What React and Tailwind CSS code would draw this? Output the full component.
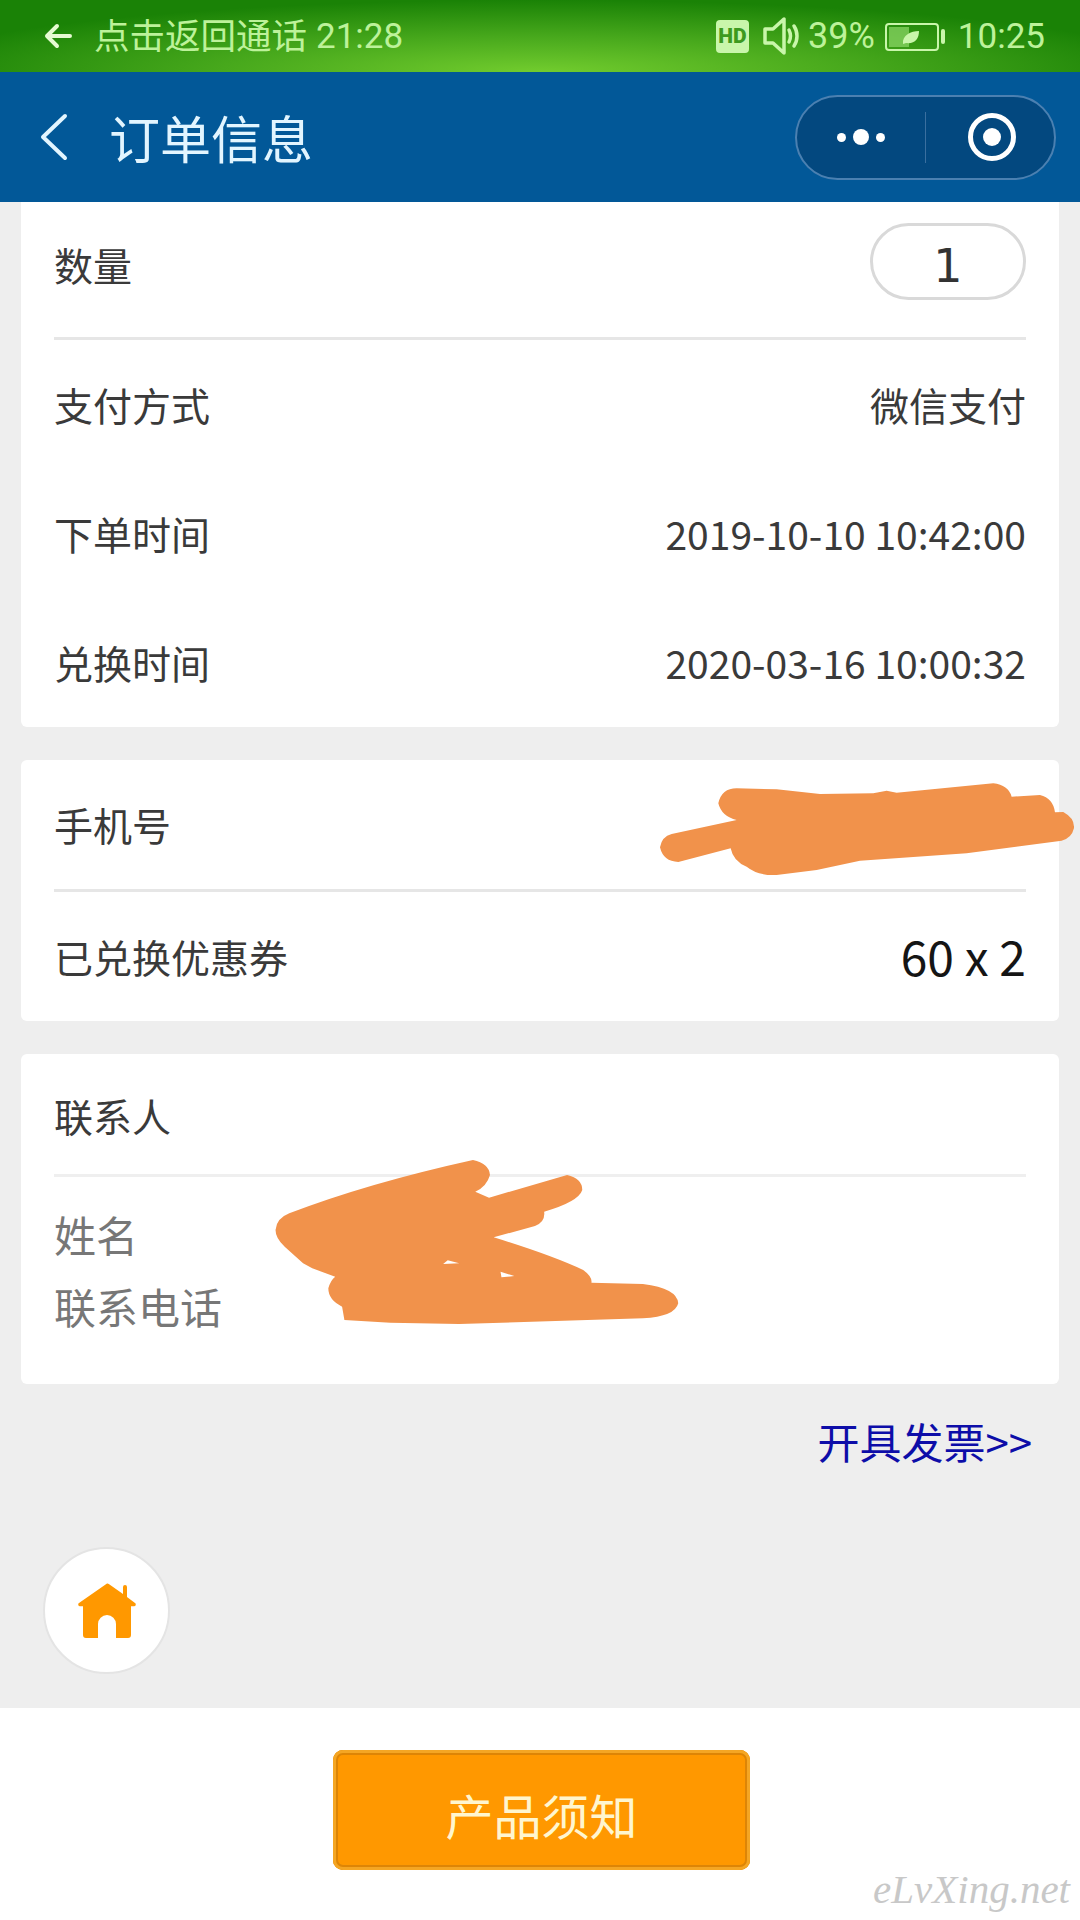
const Row = ({ label, children, className = "h-[129px]" }) => (
  <div className={`flex items-center justify-between px-[33px] ${className}`}>
    <span className="text-[39px] leading-none text-[#3a3a3a]">{label}</span>
    {children}
  </div>
);

const Divider = ({ className = "bg-[#e6e6e6]" }) => (
  <div className={`mx-[33px] h-[3px] ${className}`} />
);

const StatusBar = () => (
  <div className="flex h-[72px] items-center justify-between bg-[radial-gradient(ellipse_640px_72px_at_50%_100%,#72cc2e_0%,#47a81c_50%,#1a8206_100%)] pl-[44px] pr-[35px] font-['Roboto','Noto_Sans_CJK_SC',sans-serif] text-[#bdf29a]">
    <div className="flex items-center">
      <svg width="28" height="26" viewBox="0 0 28 26" fill="none" stroke="#e6fbd2" strokeWidth="4" strokeLinecap="round" strokeLinejoin="round">
        <path d="M26 13H3M13 3L3 13l10 10" />
      </svg>
      <span className="-mt-[4px] ml-[22px] text-[35.5px] leading-none font-['Noto_Sans_CJK_SC',sans-serif]">点击返回通话</span>
      <span className="ml-[9px] text-[35px] leading-none">21:28</span>
    </div>
    <div className="flex items-center">
      <div className="flex h-[33px] w-[33px] items-center justify-center rounded-[4px] bg-[#c9f6ab] text-[21px] leading-none font-black text-[#3d9a1f]">HD</div>
      <svg className="ml-[14px]" width="38" height="40" viewBox="0 0 38 40" fill="none" stroke="#c9f6ab" strokeWidth="3.500">
        <path d="M2 13h8L21 3v34L10 27H2z" strokeLinejoin="round" />
        <path d="M26 14c2 4 2 8 0 12M31 10c4 6 4 14 0 20" strokeLinecap="round" />
      </svg>
      <span className="ml-[7px] text-[36px] leading-none">39%</span>
      <svg className="ml-[10px]" width="62" height="30" viewBox="0 0 62 30">
        <rect x="1" y="3" width="52" height="26" rx="3" fill="none" stroke="#c9f6ab" strokeWidth="2" />
        <rect x="4" y="6" width="20" height="20" fill="#8fd96a" opacity="0.7" />
        <path d="M18 23c-1-9 8-13 16-13 0 8-4 13-13 12z" fill="#c9f6ab" />
        <rect x="56" y="8" width="4" height="15" rx="2" fill="#c9f6ab" />
      </svg>
      <span className="ml-[11px] text-[35px] leading-none">10:25</span>
    </div>
  </div>
);

const NavBar = () => (
  <div className="flex h-[130px] items-center justify-between bg-[#025898] pr-[24px] pl-[40px]">
    <div className="flex items-center text-[#e2f5ff]">
      <svg width="28" height="48" viewBox="0 0 28 48" fill="none" stroke="currentColor" strokeWidth="4" strokeLinecap="round" strokeLinejoin="round">
        <path d="M25 3L3 24l22 21" />
      </svg>
      <span className="ml-[41px] text-[51px] leading-none">订单信息</span>
    </div>
    <div className="flex h-[85px] w-[261px] items-center rounded-full border-2 border-[#4b80b1] bg-[#03487f]">
      <div className="flex w-[128px] items-center justify-center gap-[7px]">
        <span className="h-[9px] w-[9px] rounded-full bg-white" />
        <span className="h-[16px] w-[16px] rounded-full bg-white" />
        <span className="h-[9px] w-[9px] rounded-full bg-white" />
      </div>
      <div className="h-[51px] w-px bg-[#3a6f9f]" />
      <div className="flex flex-1 items-center justify-center pl-[3px]">
        <svg width="48" height="48" viewBox="0 0 48 48">
          <circle cx="24" cy="24" r="21.5" fill="none" stroke="white" strokeWidth="5" />
          <circle cx="24" cy="24" r="9" fill="white" />
        </svg>
      </div>
    </div>
  </div>
);

// orange pen marks sit on top of the private fields
const Scribbles = () => (
  <svg className="pointer-events-none absolute top-0 left-0" width="1080" height="1920" viewBox="0 0 1080 1920" fill="#f1924b">
    <path
      transform="translate(600 740) scale(0.3333)"
      d="M355 190Q365 145 410 145L530 148 660 162 820 160 860 152 890 158 1180 130Q1225 135 1235 170L1320 165Q1360 175 1365 217L1390 216Q1425 235 1422 265 1415 295 1385 302L1100 340 780 362 650 390 530 405Q475 408 440 380 400 365 392 325L235 366Q190 365 180 322 185 290 215 282L410 240Q365 230 355 190Z"
    />
    <path
      transform="translate(0 1100) scale(0.4592 0.3333)"
      d="M600 390Q602 355 630 340 800 250 1030 180 1065 190 1067 225 1060 260 1035 275L1065 293 1235 225Q1268 235 1268 270 1260 305 1185 335 1188 365 1165 378L1075 412Q1200 465 1270 510 1290 530 1288 548L1400 552Q1475 565 1477 610 1470 650 1400 655L1000 672 850 668 750 660 745 620Q715 600 715 565 720 540 730 530L680 505 660 490 620 440Q600 415 600 390Z"
    />
    <path fill="white" transform="translate(0 1100) scale(0.4592 0.3333)" d="M965 492L975 481 1000 490ZM1090 515L1120 528 1092 532Z" />
  </svg>
);

export default function App() {
  return (
    <div className="relative flex h-[1920px] w-[1080px] flex-col overflow-hidden bg-[#eeeeee] font-['Noto_Sans_CJK_SC',sans-serif]">
      <StatusBar />
      <NavBar />

      <main className="flex flex-1 flex-col gap-[33px] px-[21px]">
        <section className="h-[525px] rounded-b-[6px] bg-white">
          <Row label="数量" className="mb-[10px] h-[125px]">
            <div className="mb-[6px] flex h-[77px] w-[156px] items-center justify-center rounded-full border-[3px] border-[#d9d9d9] pt-[9px] font-['DejaVu_Sans',sans-serif] text-[46px] leading-none text-[#333333]">1</div>
          </Row>
          <Divider />
          <Row label="支付方式">
            <span className="text-[39px] leading-none text-[#3a3a3a]">微信支付</span>
          </Row>
          <Row label="下单时间">
            <span className="text-[39px] leading-none text-[#3a3a3a]">2019-10-10 10:42:00</span>
          </Row>
          <Row label="兑换时间">
            <span className="text-[39px] leading-none text-[#3a3a3a]">2020-03-16 10:00:32</span>
          </Row>
        </section>

        <section className="h-[261px] rounded-[6px] bg-white">
          <Row label="手机号" className="h-[129px]" />
          <Divider />
          <Row label="已兑换优惠券" className="h-[129px]">
            <span className="pb-[4px] text-[48px] leading-none text-[#151515]">60 x 2</span>
          </Row>
        </section>

        <section className="h-[330px] rounded-[6px] bg-white">
          <Row label="联系人" className="h-[120px] pt-[3px]" />
          <Divider className="bg-[#efefef]" />
          <div className="flex flex-col gap-[30px] px-[33px] pt-[36px] text-[42px] leading-none text-[#777777]">
            <span>姓名</span>
            <span>联系电话</span>
          </div>
        </section>

        <div className="mt-[3px] flex justify-end pr-[27px]">
          <span className="text-[42px] leading-none text-[#0d0da8]">开具发票&gt;&gt;</span>
        </div>

        <div className="mt-[52px] pl-[22px]">
          <div className="flex h-[127px] w-[127px] items-center justify-center rounded-full border-2 border-[#e4e4e4] bg-white">
            <svg width="60" height="60" viewBox="0 0 60 60" fill="#ff9800">
              <path d="M30 2.5a2 2 0 0 1 1.8.5L46 13V6a2 2 0 0 1 4 0v10l8 6a1.800 1.800 0 0 1-1 3.300h-3V54a3 3 0 0 1-3 3H39V43a9 9 0 0 0-18 0v14H9a3 3 0 0 1-3-3V25.300H3a1.800 1.800 0 0 1-1-3.300z" />
            </svg>
          </div>
        </div>
      </main>

      <footer className="relative flex h-[212px] justify-center bg-white pt-[42px]">
        <button className="ml-[3px] flex h-[120px] w-[417px] items-center justify-center rounded-[10px] bg-[#ff9800] pt-[7px] text-[48px] leading-none text-[#fff6cf] shadow-[inset_0_0_0_3px_#f5a623,inset_0_0_0_5px_#dd8506]">
          产品须知
        </button>
        <span className="absolute right-[10px] bottom-[10px] font-['Liberation_Serif',serif] text-[41px] leading-none text-[#c8c8c8] italic">eLvXing.net</span>
      </footer>

      <Scribbles />
    </div>
  );
}
